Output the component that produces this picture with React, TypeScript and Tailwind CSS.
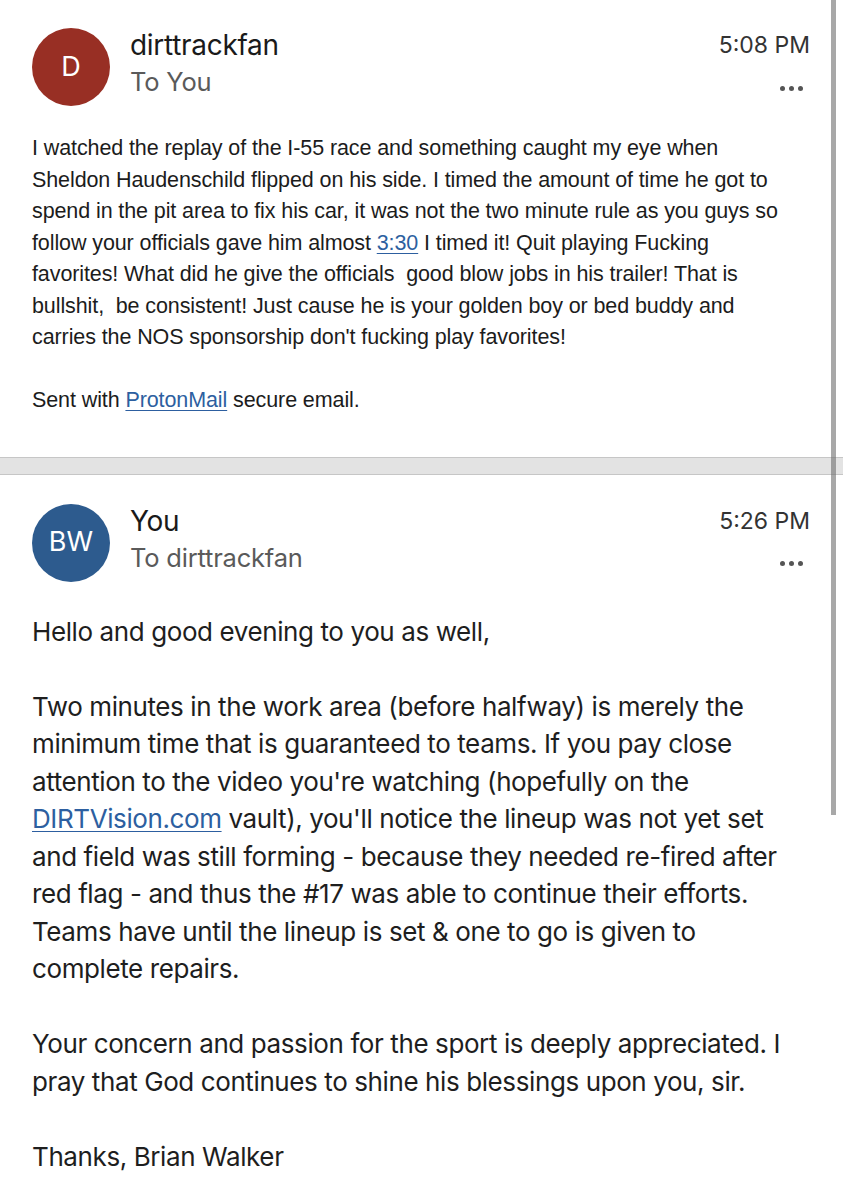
import React from "react";

interface Segment {
  text: string;
  link?: boolean;
}

type Line = Segment[] | null;

const firstBody: Line[] = [
  [{ text: "I watched the replay of the I-55 race and something caught my eye when" }],
  [{ text: "Sheldon Haudenschild flipped on his side. I timed the amount of time he got to" }],
  [{ text: "spend in the pit area to fix his car, it was not the two minute rule as you guys so" }],
  [
    { text: "follow your officials gave him almost " },
    { text: "3:30", link: true },
    { text: " I timed it! Quit playing Fucking" },
  ],
  [{ text: "favorites! What did he give the officials\u00a0 good blow jobs in his trailer! That is" }],
  [{ text: "bullshit,\u00a0 be consistent! Just cause he is your golden boy or bed buddy and" }],
  [{ text: "carries the NOS sponsorship don't fucking play favorites!" }],
  null,
  [
    { text: "Sent with " },
    { text: "ProtonMail", link: true },
    { text: " secure email." },
  ],
];

const secondBody: Line[] = [
  [{ text: "Hello and good evening to you as well," }],
  null,
  [{ text: "Two minutes in the work area (before halfway) is merely the" }],
  [{ text: "minimum time that is guaranteed to teams. If you pay close" }],
  [{ text: "attention to the video you're watching (hopefully on the" }],
  [
    { text: "DIRTVision.com", link: true },
    { text: " vault), you'll notice the lineup was not yet set" },
  ],
  [{ text: "and field was still forming - because they needed re-fired after" }],
  [{ text: "red flag - and thus the #17 was able to continue their efforts." }],
  [{ text: "Teams have until the lineup is set & one to go is given to" }],
  [{ text: "complete repairs." }],
  null,
  [{ text: "Your concern and passion for the sport is deeply appreciated. I" }],
  [{ text: "pray that God continues to shine his blessings upon you, sir." }],
  null,
  [{ text: "Thanks, Brian Walker" }],
];

function Body({ lines, className }: { lines: Line[]; className: string }) {
  return (
    <div className={className}>
      {lines.map((line, i) => (
        <div key={i} className="whitespace-pre">
          {line === null
            ? "\u00a0"
            : line.map((seg, j) =>
                seg.link ? (
                  <span key={j} className="text-[#2d5fa0] underline decoration-1 underline-offset-[3px]">
                    {seg.text}
                  </span>
                ) : (
                  <span key={j}>{seg.text}</span>
                )
              )}
        </div>
      ))}
    </div>
  );
}

function MoreDots() {
  return (
    <div className="flex flex-row items-center gap-[4px] mr-[7px]">
      <span className="w-[5px] h-[5px] rounded-full bg-[#555]" />
      <span className="w-[5px] h-[5px] rounded-full bg-[#555]" />
      <span className="w-[5px] h-[5px] rounded-full bg-[#555]" />
    </div>
  );
}

function MessageHeader({
  initials,
  avatarColor,
  name,
  to,
  time,
}: {
  initials: string;
  avatarColor: string;
  name: string;
  to: string;
  time: string;
}) {
  return (
    <div className="h-[78px] flex flex-row items-start pl-8 pr-[33px]">
      {/* Avatar */}
      <div
        className={`w-[78px] h-[78px] shrink-0 rounded-full flex items-center justify-center text-white text-[27px] font-[Inter,sans-serif] ${avatarColor}`}
      >
        {initials}
      </div>

      {/* Sender */}
      <div className="flex flex-col ml-[20px] -mt-[1px] font-[Inter,sans-serif]">
        <span className="text-[28px] leading-[36px] text-[#1a1a1a] tracking-[-0.3px]">{name}</span>
        <span className="text-[25.5px] leading-[37px] text-[#5a5a5a] tracking-[-0.2px]">{to}</span>
      </div>

      {/* Time + more */}
      <div className="ml-auto flex flex-col items-end -mt-[1px] font-[Inter,sans-serif]">
        <span className="text-[23px] leading-[36px] text-[#333]">{time}</span>
        <div className="h-[34px] mt-[8px] flex items-center">
          <MoreDots />
        </div>
      </div>
    </div>
  );
}

export default function App() {
  return (
    <div className="relative w-[843px] h-[1200px] bg-white overflow-hidden">
      {/* First message */}
      <section className="pt-[28px] pb-[40px]">
        <MessageHeader
          initials="D"
          avatarColor="bg-[#982f24]"
          name="dirttrackfan"
          to="To You"
          time="5:08 PM"
        />
        <Body
          lines={firstBody}
          className="mt-[27px] pl-8 text-[21.5px] leading-[31.5px] text-[#1c1c1c] tracking-[-0.1px] font-['Liberation_Sans',Arial,sans-serif]"
        />
      </section>

      {/* Divider */}
      <div className="h-[18px] bg-[#e3e3e3] border-y border-[#c6c6c6]" />

      {/* Second message */}
      <section className="pt-[29px]">
        <MessageHeader
          initials="BW"
          avatarColor="bg-[#2d5b8e]"
          name="You"
          to="To dirttrackfan"
          time="5:26 PM"
        />
        <Body
          lines={secondBody}
          className="mt-[31px] pl-8 text-[26px] leading-[37.5px] text-[#1e1e1e] tracking-[-0.4px] font-[Inter,sans-serif]"
        />
      </section>

      {/* Scrollbar */}
      <div className="absolute top-0 left-[831px] w-[5px] h-[815px] bg-[#6e6e6e]/60" />
    </div>
  );
}
